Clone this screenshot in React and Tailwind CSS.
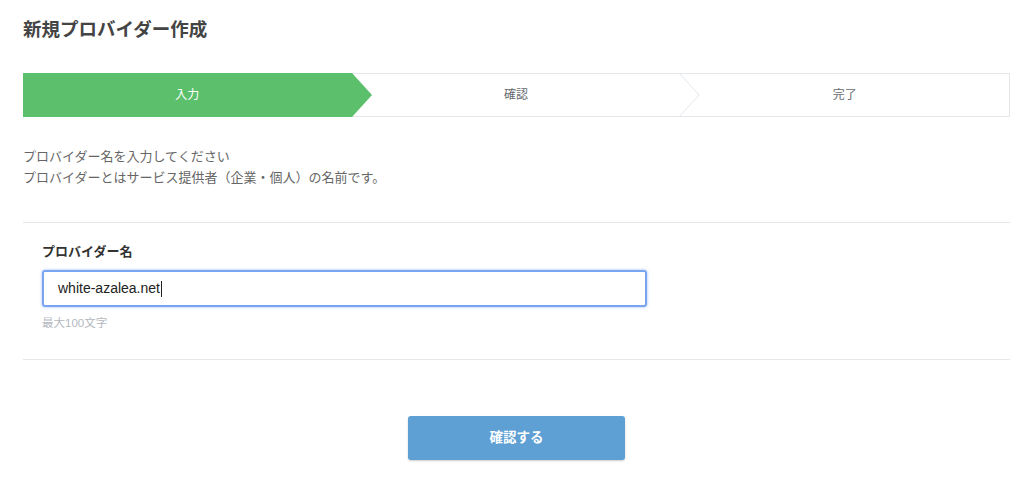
import React from 'react';

const font = { fontFamily: '"Liberation Sans", "Noto Sans CJK JP", sans-serif' };

const Stepper = () => (
  <div className="flex h-[44px] w-full">
    <div className="relative flex flex-1 items-center justify-center bg-[#5cbf6b] text-[12px] text-white">
      <span>入力</span>
      <svg className="absolute -right-[20px] top-0 z-10 h-[44px] w-[20px]" viewBox="0 0 20 44">
        <polygon points="0,0 20,22 0,44" fill="#5cbf6b" />
      </svg>
    </div>
    <div className="relative flex flex-1 items-center justify-center border-y border-[#e3e6ea] text-[12px] text-[#666a70]">
      <span>確認</span>
      <svg className="absolute -right-[20px] -top-px z-10 h-[44px] w-[21px]" viewBox="0 0 21 44">
        <polyline points="0,0 20,22 0,44" fill="white" stroke="#e3e6ea" strokeWidth="1" />
      </svg>
    </div>
    <div className="flex flex-1 items-center justify-center border-y border-r border-[#e3e6ea] text-[12px] text-[#666a70]">
      <span>完了</span>
    </div>
  </div>
);

export default function App() {
  return (
    <div className="min-h-[490px] w-full bg-white pl-[23px] pr-[14px] pt-[18px] text-[#444]" style={font}>
      <h1 className="text-[18.5px] font-bold leading-[24px] text-[#444]">新規プロバイダー作成</h1>

      <div className="mt-[31px]">
        <Stepper />
      </div>

      <div className="mt-[29px] text-[13px] leading-[21px] text-[#666]">
        <p>プロバイダー名を入力してください</p>
        <p>プロバイダーとはサービス提供者（企業・個人）の名前です。</p>
      </div>

      <div className="mt-[34px] border-t border-[#e4e6e9] px-[19px] pb-[29px] pt-[20px]">
        <label className="block text-[13px] font-bold leading-[18px] text-[#333]">プロバイダー名</label>
        <div className="mt-[9px] w-[605px] rounded-[3px] border-2 border-[#79a4ef] shadow-[0_0_3px_rgba(90,140,240,0.6)]">
          <div className="flex h-[33px] items-center px-[14px] text-[14px] text-[#222]">
            white-azalea.net<span className="ml-px inline-block h-[16px] w-px bg-[#222]" />
          </div>
        </div>
        <p className="mt-[9px] text-[11.5px] leading-[14px] text-[#b4b9c0]">最大100文字</p>
      </div>

      <div className="border-t border-[#e4e6e9]" />

      <div className="flex justify-center pt-[56px]">
        <button className="h-[44px] w-[217px] rounded-[3px] bg-[#5ea0d3] text-[13.5px] font-bold text-white shadow-[0_1px_2px_rgba(0,0,0,0.2)]">
          確認する
        </button>
      </div>
    </div>
  );
}
